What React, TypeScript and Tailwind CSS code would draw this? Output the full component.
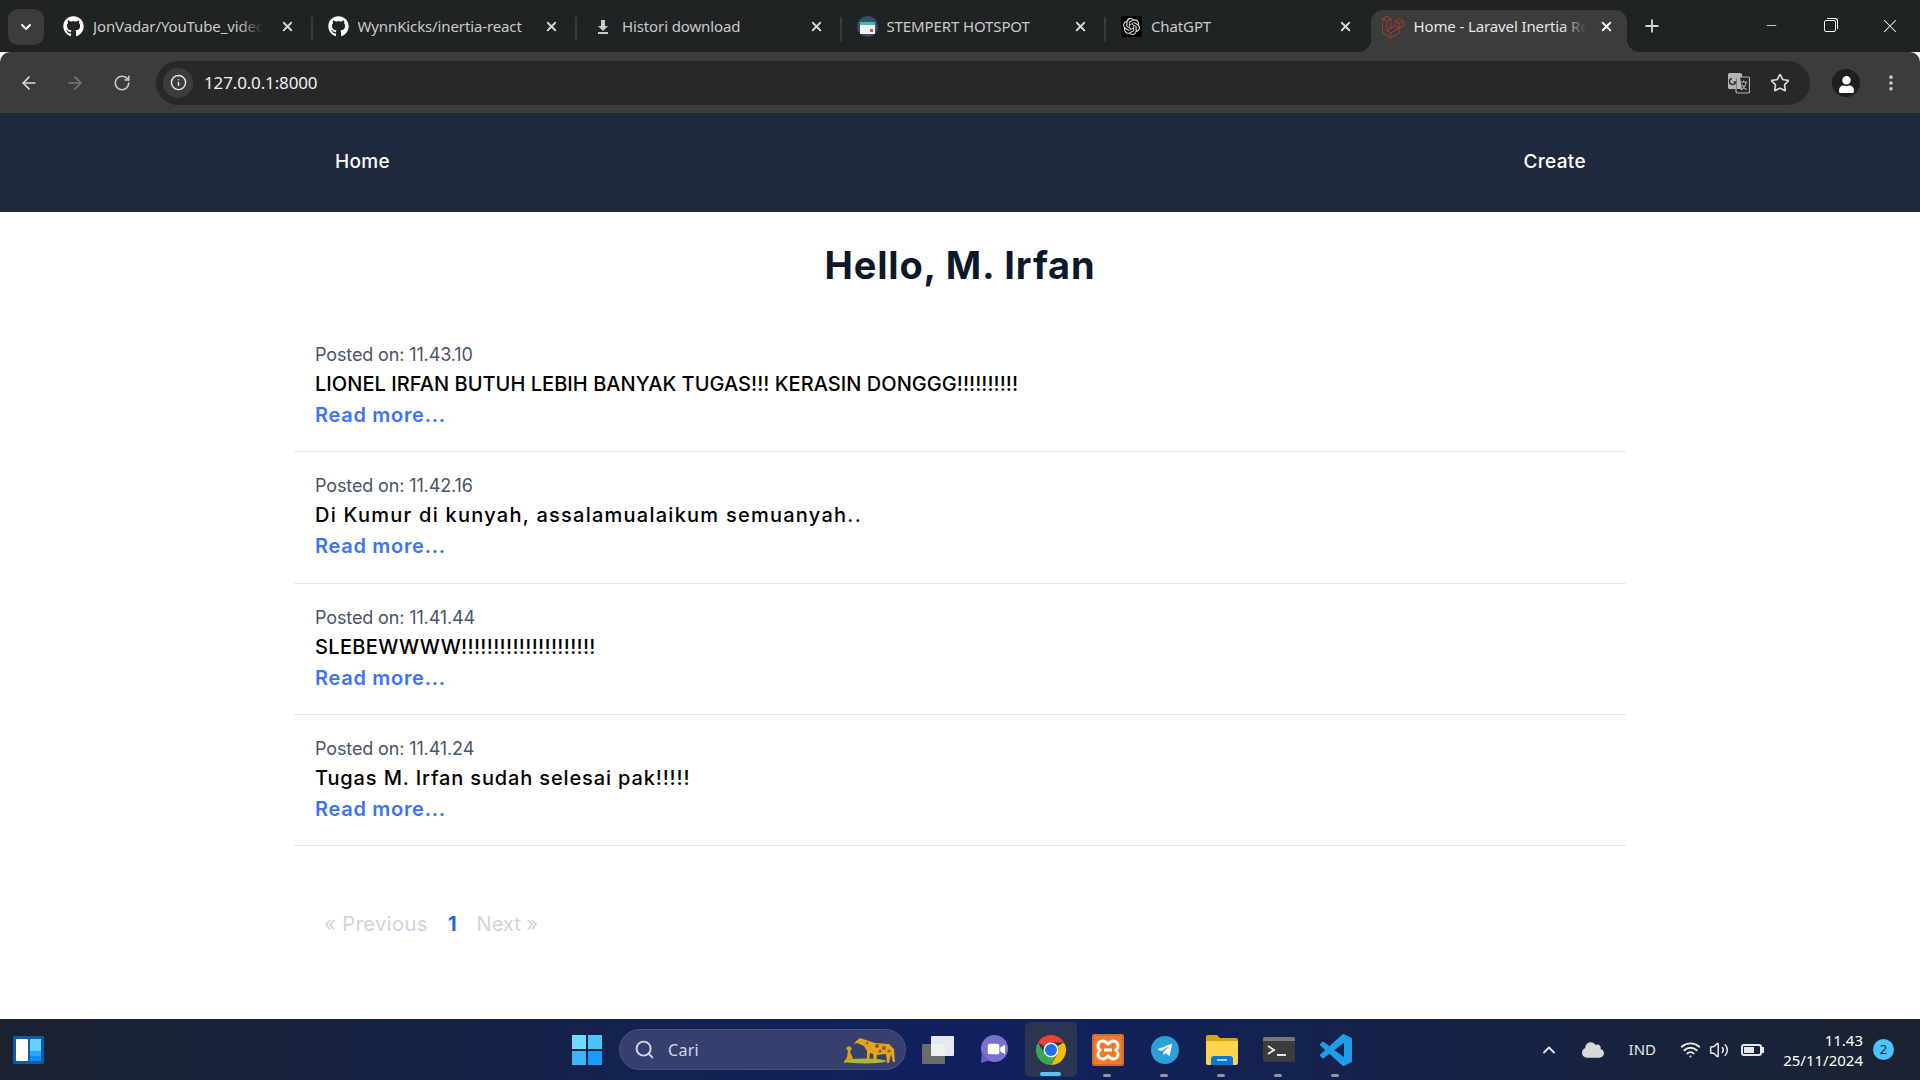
import { ArrowLeft, ArrowRight, RotateCw, Info, Star, EllipsisVertical, X, Plus, Minus, ChevronDown, ChevronUp, Search, Wifi, Volume2 } from "lucide-react";
import { FaGithub, FaTelegramPlane, FaUser, FaCloud } from "react-icons/fa";
import { SiLaravel, SiOpenai } from "react-icons/si";

const tabFont = "font-['Noto_Sans','Open_Sans',sans-serif]";
const pageFont = "font-['Inter','Noto_Sans',sans-serif]";

const posts = [
  { time: "11.43.10", body: "LIONEL IRFAN BUTUH LEBIH BANYAK TUGAS!!! KERASIN DONGGG!!!!!!!!!!", spacing: "tracking-[0.04px]" },
  { time: "11.42.16", body: "Di Kumur di kunyah, assalamualaikum semuanyah..", spacing: "tracking-[1.25px]" },
  { time: "11.41.44", body: "SLEBEWWWW!!!!!!!!!!!!!!!!!!!!!", spacing: "tracking-[0.33px]" },
  { time: "11.41.24", body: "Tugas M. Irfan sudah selesai pak!!!!!", spacing: "tracking-[0.86px]" },
];

const Tab = ({ icon, title, fade }: { icon: React.ReactNode; title: string; fade?: boolean }) => (
  <div className="w-[264.5px] h-[42px] flex items-center pl-[15px] pr-[18px] pb-[9px] relative shrink-0">
    <div className="w-[21px] h-[21px] flex items-center justify-center shrink-0">{icon}</div>
    <div className="relative ml-[9px] w-[170px] overflow-hidden whitespace-nowrap text-[15px] tracking-[-0.12px] text-[#c8cacb]">
      {title}
      {fade && <div className="absolute right-0 top-0 bottom-0 w-6 bg-gradient-to-r from-transparent to-[#202323]" />}
    </div>
    <X className="ml-auto w-[15px] h-[15px] text-[#d5d6d6]" strokeWidth={3} />
    <div className="absolute right-0 top-[7px] h-[24px] w-[2px] bg-[#3a3c3c]" />
  </div>
);

const DownloadIcon = () => (
  <svg viewBox="0 0 16 16" className="w-[16px] h-[16px]" fill="#c8cacb">
    <path d="M6 1h4v6h3l-5 5-5-5h3z" />
    <rect x="3" y="13" width="10" height="2" />
  </svg>
);

const HotspotIcon = () => (
  <svg viewBox="0 0 21 21" className="w-[21px] h-[21px]">
    <circle cx="10.5" cy="10.5" r="10.5" fill="#34506c" />
    <rect x="3" y="6" width="15" height="12" fill="#f0f2f4" />
    <rect x="3" y="6" width="15" height="3" fill="#40bfa8" />
    <rect x="13" y="13" width="3" height="3" fill="#d8504a" />
  </svg>
);

const ChromeIcon = () => (
  <svg viewBox="0 0 32 32" className="w-[32px] h-[32px]">
    <path d="M16 1a15 15 0 0 1 13 7.5H16a7.5 7.5 0 0 0-6.5 3.75L3 8.5A15 15 0 0 1 16 1z" fill="#ea4335" />
    <path d="M29 8.5A15 15 0 0 1 16 31l6.5-11.25A7.5 7.5 0 0 0 22.5 12z" fill="#fbbc04" />
    <path d="M16 31A15 15 0 0 1 3 8.5l6.5 11.25A7.5 7.5 0 0 0 16 23.5l6.5-3.75z" fill="#34a853" />
    <circle cx="16" cy="16" r="7.5" fill="#fff" />
    <circle cx="16" cy="16" r="6" fill="#1a73e8" />
  </svg>
);

const XamppIcon = () => (
  <svg viewBox="0 0 32 32" className="w-[32px] h-[32px]">
    <rect width="32" height="32" rx="2" fill="#c9702c" />
    <rect x="2" y="2" width="28" height="28" fill="#f3792b" />
    <path d="M11 7c-3 0-5 2-5 5 0 2 1 3 2 4-1 1-2 2-2 4 0 3 2 5 5 5 2 0 3-1 5-3 2 2 3 3 5 3 3 0 5-2 5-5 0-2-1-3-2-4 1-1 2-2 2-4 0-3-2-5-5-5-2 0-3 1-5 3-2-2-3-3-5-3z" fill="none" stroke="#fff" strokeWidth="3" />
    <path d="M12 16h8" stroke="#fff" strokeWidth="3" />
  </svg>
);

const FolderIcon = () => (
  <svg viewBox="0 0 32 30" className="w-[32px] h-[30px]">
    <path d="M0 2a2 2 0 0 1 2-2h9l3 3h16a2 2 0 0 1 2 2v2H0z" fill="#d9a514" />
    <path d="M0 6h32v22a2 2 0 0 1-2 2H2a2 2 0 0 1-2-2z" fill="#fdd34d" />
    <path d="M5 30v-6a3 3 0 0 1 3-3h16a3 3 0 0 1 3 3v6z" fill="#0a78d4" />
    <rect x="11" y="24" width="10" height="2" fill="#9ed0f5" />
  </svg>
);

const TerminalIcon = () => (
  <svg viewBox="0 0 32 25" className="w-[32px] h-[25px]">
    <rect width="32" height="25" rx="2" fill="#3c3c3c" />
    <path d="M0 2a2 2 0 0 1 2-2h28a2 2 0 0 1 2 2v2H0z" fill="#777" />
    <path d="M5 9l6 4-6 4" fill="none" stroke="#e6e6e6" strokeWidth="2" />
    <rect x="14" y="17" width="9" height="2" fill="#e6e6e6" />
  </svg>
);

const VscodeIcon = () => (
  <svg viewBox="0 0 24 24" className="w-[32px] h-[32px]">
    <path fill="#1f9ee8" d="M23.15 2.587L18.21.21a1.494 1.494 0 0 0-1.705.29l-9.46 8.63-4.12-3.128a.999.999 0 0 0-1.276.057L.327 7.261A1 1 0 0 0 .326 8.74L3.899 12 .326 15.26a1 1 0 0 0 .001 1.479L1.65 17.94a.999.999 0 0 0 1.276.057l4.12-3.128 9.46 8.63a1.492 1.492 0 0 0 1.704.29l4.942-2.377A1.5 1.5 0 0 0 24 20.06V3.939a1.5 1.5 0 0 0-.85-1.352zm-5.146 14.861L10.826 12l7.178-5.448v10.896z" />
  </svg>
);

const MeetIcon = () => (
  <svg viewBox="0 0 30 30" className="w-[29px] h-[29px]">
    <circle cx="15" cy="14" r="14" fill="#7b6fd2" />
    <path d="M2 18l-1 11 9-3z" fill="#6a5fc4" />
    <rect x="8" y="9" width="12" height="11" rx="2" fill="#fff" />
    <path d="M21 13l5-3v10l-5-3z" fill="#fff" />
  </svg>
);

const TranslateIcon = () => (
  <svg viewBox="0 0 22 22" className="w-[22px] h-[22px]">
    <rect x="0" y="1" width="14" height="16" rx="1.5" fill="#b5b5b5" />
    <rect x="8" y="5" width="13.5" height="16" rx="1.5" fill="#282828" stroke="#b5b5b5" strokeWidth="1.2" />
    <path d="M9 5h3l2 12H9z" fill="#b5b5b5" />
    <path d="M4 6.5a3 3 0 1 0 3.5 3.4H5.6" fill="none" stroke="#333" strokeWidth="1.5" />
    <path d="M12 10h7M15.5 8.5v1.5M13 18c3-1.5 4.5-4 5-8M14 12.5c1 2.500 2.500 4 4.500 5" fill="none" stroke="#b5b5b5" strokeWidth="1.1" />
  </svg>
);

const GiraffeIcon = () => (
  <svg viewBox="0 0 54 28" className="w-[54px] h-[28px]">
    <ellipse cx="24" cy="25" rx="21" ry="2.5" fill="#a8b83a" />
    {/* adult */}
    <path d="M15 5l4-3 3 1 12 4 14 1 5 5 1 13h-2l-2-8-2 9h-2l-1-9-9 1-1 8h-2l-1-9-3-1-1 9h-2l0-11-3-5-7-3-3 1z" fill="#e3a51f" />
    {/* calf */}
    <path d="M3 27l3-6 1-6 -2-3 3-2 3 2 -2 4 2 4 2 7h-2l-2-4-3 2-1 2z" fill="#dca01c" />
    <circle cx="26" cy="7" r="1.2" fill="#8a5a10" />
    <circle cx="36" cy="10" r="2" fill="#8a5a10" />
    <circle cx="43" cy="12" r="2" fill="#8a5a10" />
    <circle cx="48" cy="15" r="1.600" fill="#8a5a10" />
    <circle cx="39" cy="15" r="1.500" fill="#8a5a10" />
  </svg>
);

const TaskItem = ({ children, dot }: { children: React.ReactNode; dot?: boolean }) => (
  <div className="relative w-[57px] h-[61px] flex items-center justify-center">
    {children}
    {dot && <div className="absolute bottom-[3px] left-[24px] w-[8px] h-[3px] rounded-full bg-[#8f95a3]" />}
  </div>
);

export default function App() {
  return (
    <div className="w-[1920px] h-[1080px] flex flex-col overflow-hidden bg-white">
      {/* Browser tab strip */}
      <div className={`h-[52px] bg-[#202323] flex pt-[10px] shrink-0 ${tabFont}`}>
        <div className="w-[36px] h-[36px] ml-[8px] mr-[4px] -mt-[1px] rounded-[10px] bg-[#3c3c3c] flex items-center justify-center shrink-0">
          <ChevronDown className="w-[16px] h-[16px] text-white" strokeWidth={3} />
        </div>
        <Tab icon={<FaGithub className="w-[21px] h-[21px] text-white" />} title="JonVadar/YouTube_video_tutorial" fade />
        <Tab icon={<FaGithub className="w-[21px] h-[21px] text-white" />} title="WynnKicks/inertia-react" />
        <Tab icon={<DownloadIcon />} title="Histori download" />
        <Tab icon={<HotspotIcon />} title="STEMPERT HOTSPOT" />
        <div className="w-[264.5px] h-[42px] flex items-center pl-[15px] pr-[18px] pb-[9px] shrink-0">
          <div className="w-[21px] h-[21px] bg-black flex items-center justify-center rounded-[3px]">
            <SiOpenai className="w-[17px] h-[17px] text-[#e8e8e8]" />
          </div>
          <span className="ml-[9px] text-[15px] tracking-[-0.12px] text-[#c8cacb]">ChatGPT</span>
          <X className="ml-auto w-[15px] h-[15px] text-[#d5d6d6]" strokeWidth={3} />
        </div>
        <div className="relative w-[256px] h-[42px] bg-[#3c3c3c] rounded-t-[12px] flex items-center pl-[11px] pr-[13px] pb-[9px] shrink-0">
          <SiLaravel className="w-[22px] h-[22px] text-[#c23a2f]" />
          <div className="relative ml-[10px] w-[172px] overflow-hidden whitespace-nowrap text-[15px] tracking-[-0.12px] text-[#e6e7e7]">
            Home - Laravel Inertia React
            <div className="absolute right-0 top-0 bottom-0 w-6 bg-gradient-to-r from-transparent to-[#3c3c3c]" />
          </div>
          <X className="ml-auto w-[15px] h-[15px] text-white" strokeWidth={3} />
          {/* flared bottom corners of the active tab */}
          <div className="absolute bottom-0 -left-[12px] w-[12px] h-[12px] bg-[radial-gradient(circle_at_0_0,transparent_12px,#3c3c3c_12px)]" />
          <div className="absolute bottom-0 -right-[12px] w-[12px] h-[12px] bg-[radial-gradient(circle_at_100%_0,transparent_12px,#3c3c3c_12px)]" />
        </div>
        <Plus className="ml-[15px] mt-[6px] w-[20px] h-[20px] text-[#d5d6d6]" strokeWidth={2.2} />
        <div className="ml-auto flex -mt-[10px] h-[52px] items-center text-white">
          <div className="w-[59px] pb-[2px] flex justify-center"><Minus className="w-[15px] h-[15px]" strokeWidth={1.2} /></div>
          <div className="w-[59px] pb-[1px] pr-[2px] flex justify-center">
            <div className="relative w-[12px] h-[12px] border border-white rounded-[2px] mt-[1px]">
              <div className="absolute -top-[3px] -right-[3px] w-[11px] h-[11px] border-t border-r border-white rounded-tr-[3px]" />
            </div>
          </div>
          <div className="w-[60px] pr-[1px] flex justify-center"><X className="w-[22px] h-[22px]" strokeWidth={1.1} /></div>
        </div>
      </div>

      {/* Toolbar */}
      <div className={`h-[61px] bg-[#3c3c3c] rounded-tl-[10px] rounded-tr-[10px] flex items-center shrink-0 ${tabFont}`}>
        <div className="w-[156px] flex items-center pl-[19px] gap-[26px] shrink-0">
          <ArrowLeft className="w-[20px] h-[20px] text-[#d8d8d8]" strokeWidth={2} />
          <ArrowRight className="w-[20px] h-[20px] text-[#777]" strokeWidth={2} />
          <RotateCw className="ml-[2px] w-[18px] h-[18px] text-[#c8c8c8]" strokeWidth={2.2} />
        </div>
        <div className="w-[1654px] h-[44px] rounded-full bg-[#282828] flex items-center pl-[7px] pr-[20px]">
          <div className="w-[30px] h-[30px] rounded-full bg-[#3c3c3c] flex items-center justify-center">
            <Info className="w-[17px] h-[17px] text-[#e8e8e8]" strokeWidth={2} />
          </div>
          <span className="ml-[11px] text-[17px] tracking-[-0.15px] text-[#f0f0f0]">127.0.0.1:8000</span>
          <div className="ml-auto"><TranslateIcon /></div>
          <Star className="ml-[20px] w-[20px] h-[20px] text-[#d8d8d8]" strokeWidth={2} />
        </div>
        <div className="ml-[22px] w-[28px] h-[28px] rounded-full bg-[#1e1e1e] flex items-end justify-center overflow-hidden">
          <FaUser className="w-[17px] h-[17px] text-white mb-[4px]" />
        </div>
        <EllipsisVertical className="ml-[21px] w-[20px] h-[20px] text-[#c8c8c8]" strokeWidth={2.4} />
      </div>

      {/* Page */}
      <div className={`flex-1 flex flex-col text-[#0f172a] ${pageFont}`}>
        <header className="h-[99px] bg-[#1e293b] flex items-center justify-between pl-[335px] pr-[334px] text-white text-[19px] tracking-[0.35px] font-medium shrink-0">
          <span>Home</span>
          <span>Create</span>
        </header>
        <main className="w-[1332px] mx-auto">
          <h1 className="h-[109px] pt-[29px] text-center text-[38px] tracking-[0.85px] leading-[48px] font-bold text-[#0f172a]">Hello, M. Irfan</h1>
          {posts.map((post) => (
            <div key={post.time} className="h-[131.33px] px-[21px] pt-[20px] border-b border-[#e2e8f0]">
              <div className="text-[18px] tracking-[-0.13px] leading-[28px] text-[#475569]">Posted on: {post.time}</div>
              <div className={`text-[20px] leading-[30px] font-medium text-black ${post.spacing}`}>{post.body}</div>
              <a className="block text-[20px] tracking-[0.7px] leading-[32px] font-semibold text-[#3b76f0]">Read more...</a>
            </div>
          ))}
          <div className="flex items-center mt-[63px] pl-[30px] text-[20px] leading-[30px] text-[#cbd5e1]">
            <span className="tracking-[0.5px]">« Previous</span>
            <span className="ml-[20px] font-bold text-[#2563eb]">1</span>
            <span className="ml-[20px]">Next »</span>
          </div>
        </main>
      </div>

      {/* Windows taskbar */}
      <div className={`h-[61px] shrink-0 flex items-center relative bg-gradient-to-r from-[#1b2230] via-[#10205f] to-[#1b2230] ${tabFont}`}>
        <div className="w-[556px] pl-[13px]">
          <div className="w-[31px] h-[28px] bg-[#0f5da8] rounded-[2px] flex gap-[2px] p-[3px]">
            <div className="w-[12px] bg-white rounded-[1px]" />
            <div className="flex-1 flex flex-col">
              <div className="flex-1 bg-[#6ad0ff]" />
              <div className="h-[5px] bg-[#2aa8f8]" />
              <div className="h-[5px] bg-[#0d8df0]" />
            </div>
          </div>
        </div>
        <div className="w-[62px] flex justify-center">
          <div className="grid grid-cols-2 gap-[2px] w-[30px] h-[30px]">
            <div className="bg-[#6fdcff]" />
            <div className="bg-[#4cc2fb]" />
            <div className="bg-[#3cb6fb]" />
            <div className="bg-[#1a9bfa]" />
          </div>
        </div>
        <div className="w-[287px] h-[41px] ml-[1px] rounded-full bg-[#35406f] border border-[#4a5482] flex items-center pl-[14px] pr-[10px] text-[#d5d8e4]">
          <Search className="w-[21px] h-[21px]" strokeWidth={2.2} />
          <span className="ml-[13px] text-[16px] tracking-[0.3px]">Cari</span>
          <div className="ml-auto"><GiraffeIcon /></div>
        </div>
        <div className="flex ml-[3px]">
          <TaskItem>
            <div className="relative w-[32px] h-[28px]">
              <div className="absolute left-0 bottom-0 w-[23px] h-[20px] bg-[#6b6b6b] rounded-[1px]" />
              <div className="absolute right-0 top-0 w-[23px] h-[20px] bg-white/90 rounded-[1px]" />
            </div>
          </TaskItem>
          <TaskItem><MeetIcon /></TaskItem>
          <div className="relative w-[52px] h-[55px] mx-[2px] my-[3px] rounded-[5px] bg-[#2b3450] flex items-center justify-center">
            <ChromeIcon />
            <div className="absolute bottom-[1px] left-[15px] w-[21px] h-[4px] rounded-full bg-[#5cc2f5]" />
          </div>
          <TaskItem dot><XamppIcon /></TaskItem>
          <TaskItem dot>
            <div className="w-[28px] h-[28px] rounded-full bg-[#2a9fd8] flex items-center justify-center">
              <FaTelegramPlane className="w-[16px] h-[16px] text-white" />
            </div>
          </TaskItem>
          <TaskItem dot><FolderIcon /></TaskItem>
          <TaskItem dot><TerminalIcon /></TaskItem>
          <TaskItem dot><VscodeIcon /></TaskItem>
        </div>
        <div className="ml-auto flex items-center text-[#e8e8e8]">
          <ChevronUp className="w-[20px] h-[20px]" strokeWidth={2.2} />
          <FaCloud className="ml-[23px] w-[22px] h-[22px] text-[#d8d8d8]" />
          <span className="ml-[25px] text-[15px]">IND</span>
          <Wifi className="ml-[24px] w-[21px] h-[21px]" strokeWidth={2.2} />
          <Volume2 className="ml-[8px] w-[20px] h-[20px]" strokeWidth={1.8} />
          <div className="ml-[12px] w-[21px] h-[12px] border-2 border-[#e8e8e8] rounded-[3px] p-[1px] relative">
            <div className="w-[10px] h-full bg-[#e8e8e8]" />
            <div className="absolute -right-[4px] top-[1px] w-[2px] h-[6px] bg-[#e8e8e8]" />
          </div>
          <div className="ml-[15px] w-[86px] text-right text-[15px] leading-[20px] text-white">
            <div>11.43</div>
            <div>25/11/2024</div>
          </div>
          <div className="ml-[10px] mr-[26px] w-[21px] h-[21px] rounded-full bg-[#4cc2ff] text-[#10203a] text-[13px] flex items-center justify-center">2</div>
        </div>
      </div>
    </div>
  );
}
